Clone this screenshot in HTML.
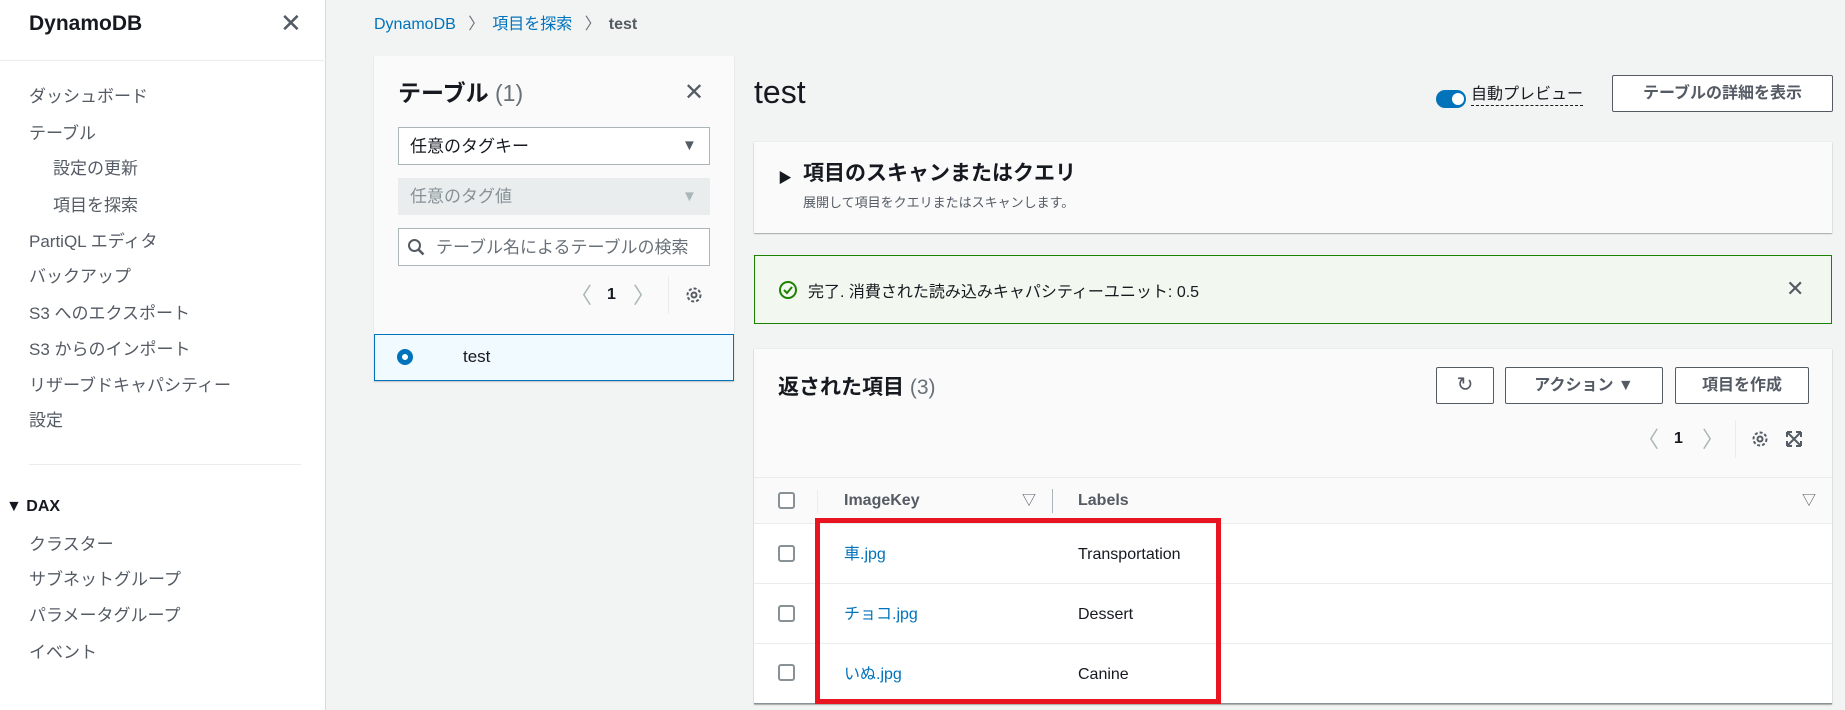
<!DOCTYPE html>
<html><head><meta charset="utf-8"><style>
*{box-sizing:border-box;margin:0;padding:0}
body{width:1845px;height:710px;overflow:hidden;background:#f2f3f3;font-family:"Liberation Sans","Noto Sans CJK JP",sans-serif;color:#16191f;position:relative;line-height:1.25}
.a{position:absolute;white-space:nowrap;line-height:1.25}
.side{position:absolute;left:0;top:0;width:326px;height:710px;background:#fff;border-right:1px solid #d5dbdb}
.nav{font-size:17px;color:#545b64;position:absolute;left:29px;line-height:20px}
.blue{color:#0073bb}
.btn{position:absolute;border:1px solid #545b64;background:#fff;border-radius:2px;font-weight:bold;font-size:16px;color:#545b64;display:flex;align-items:center;justify-content:center}
.cb{position:absolute;width:17px;height:17px;border:2px solid #879196;border-radius:3px;background:#fff}
</style></head><body>
<div class="side">
 <div class="a" style="left:29px;top:11px;font-size:21px;font-weight:bold">DynamoDB</div>
 <div class="a" style="left:280px;top:7px;font-size:26px;color:#545b64">✕</div>
 <div style="position:absolute;left:0;top:60px;width:326px;border-top:1px solid #eaeded"></div>
 <div class="nav" style="top:87px">ダッシュボード</div>
 <div class="nav" style="top:124px">テーブル</div>
 <div class="nav" style="top:159px;left:53px">設定の更新</div>
 <div class="nav" style="top:196px;left:53px">項目を探索</div>
 <div class="nav" style="top:232px">PartiQL エディタ</div>
 <div class="nav" style="top:267px">バックアップ</div>
 <div class="nav" style="top:304px">S3 へのエクスポート</div>
 <div class="nav" style="top:340px">S3 からのインポート</div>
 <div class="nav" style="top:376px">リザーブドキャパシティー</div>
 <div class="nav" style="top:411px">設定</div>
 <div style="position:absolute;left:29px;top:464px;width:272px;border-top:1px solid #eaeded"></div>
 <div class="nav" style="top:497px;left:6px;color:#16191f;font-weight:bold;font-size:16px">▼ DAX</div>
 <div class="nav" style="top:535px">クラスター</div>
 <div class="nav" style="top:570px">サブネットグループ</div>
 <div class="nav" style="top:606px">パラメータグループ</div>
 <div class="nav" style="top:643px">イベント</div>
</div>
<div class="a" style="left:374px;top:15px;font-size:16px"><span class="blue">DynamoDB</span> <span style="color:#687078;margin:0 8px">〉</span><span class="blue">項目を探索</span> <span style="color:#687078;margin:0 8px">〉</span><span style="color:#545b64;font-weight:bold">test</span></div>

<div style="position:absolute;left:374px;top:56px;width:360px;height:325px;background:#fafafa;box-shadow:0 1px 1px rgba(0,0,0,.2)"></div>
<div class="a" style="left:398px;top:79px;font-size:23px;font-weight:bold">テーブル <span style="font-weight:normal;color:#687078">(1)</span></div>
<div class="a" style="left:684px;top:78px;font-size:24px;color:#545b64">✕</div>
<div style="position:absolute;left:398px;top:127px;width:312px;height:38px;border:1px solid #aab7b8;background:#fff"></div>
<div class="a" style="left:410px;top:136px;font-size:17px">任意のタグキー</div>
<div class="a" style="left:682px;top:137px;font-size:15px;color:#545b64">▼</div>
<div style="position:absolute;left:398px;top:178px;width:312px;height:37px;background:#eaeded"></div>
<div class="a" style="left:410px;top:186px;font-size:17px;color:#879196">任意のタグ値</div>
<div class="a" style="left:682px;top:188px;font-size:15px;color:#aab7b8">▼</div>
<div style="position:absolute;left:398px;top:228px;width:312px;height:38px;border:1px solid #aab7b8;background:#fff"></div>
<svg class="a" style="left:407px;top:238px" width="18" height="18"><circle cx="7.5" cy="7.5" r="5.5" fill="none" stroke="#545b64" stroke-width="2"/><path d="M11.5 11.5l5 5" stroke="#545b64" stroke-width="2.5"/></svg>
<div class="a" style="left:436px;top:237px;font-size:17px;color:#687078">テーブル名によるテーブルの検索</div>
<div class="a" style="left:570px;top:282px;font-size:22px;color:#aab7b8">〈</div>
<div class="a" style="left:607px;top:285px;font-size:16px;font-weight:bold">1</div>
<div class="a" style="left:633px;top:282px;font-size:22px;color:#aab7b8">〉</div>
<div style="position:absolute;left:668px;top:276px;height:38px;border-left:1px solid #eaeded"></div>
<svg class="a" style="left:684px;top:285px" width="20" height="20" viewBox="0 0 20 20"><circle cx="10" cy="10" r="6.5" fill="none" stroke="#545b64" stroke-width="2" stroke-dasharray="3 2"/><circle cx="10" cy="10" r="2.5" fill="none" stroke="#545b64" stroke-width="2"/></svg>
<div style="position:absolute;left:374px;top:334px;width:360px;height:47px;background:#f1faff;border:1px solid #0073bb"></div>
<div style="position:absolute;left:397px;top:349px;width:16px;height:16px;border-radius:50%;border:5px solid #0073bb;background:#fff"></div>
<div class="a" style="left:463px;top:346px;font-size:17px">test</div>

<div class="a" style="left:754px;top:72px;font-size:32px">test</div>
<div style="position:absolute;left:1436px;top:90px;width:30px;height:18px;border-radius:9px;background:#0073bb"></div>
<div style="position:absolute;left:1452px;top:93px;width:12px;height:12px;border-radius:50%;background:#fff"></div>
<div class="a" style="left:1471px;top:85px;font-size:16px;border-bottom:1px dashed #16191f;line-height:20px">自動プレビュー</div>
<div class="btn" style="left:1612px;top:75px;width:221px;height:37px">テーブルの詳細を表示</div>

<div style="position:absolute;left:754px;top:142px;width:1078px;height:91px;background:#fafafa;box-shadow:0 1px 1px rgba(0,0,0,.3),0 0 1px rgba(0,0,0,.15)"></div>
<div class="a" style="left:778px;top:170px;font-size:14px">▶</div>
<div class="a" style="left:803px;top:161px;font-size:21px;font-weight:bold">項目のスキャンまたはクエリ</div>
<div class="a" style="left:803px;top:195px;font-size:13px;color:#545b64">展開して項目をクエリまたはスキャンします。</div>

<div style="position:absolute;left:754px;top:255px;width:1078px;height:69px;background:#f2f8f0;border:1px solid #1d8102"></div>
<svg class="a" style="left:778px;top:280px" width="20" height="20"><circle cx="10" cy="10" r="8" fill="none" stroke="#1d8102" stroke-width="2"/><path d="M6 10l3 3 5-6" fill="none" stroke="#1d8102" stroke-width="2"/></svg>
<div class="a" style="left:808px;top:283px;font-size:16px">完了. 消費された読み込みキャパシティーユニット: 0.5</div>
<div class="a" style="left:1786px;top:275px;font-size:22px;color:#545b64">✕</div>

<div style="position:absolute;left:754px;top:349px;width:1078px;height:355px;background:#fafafa;box-shadow:0 1px 1px rgba(0,0,0,.3),0 0 1px rgba(0,0,0,.15)"></div>
<div class="a" style="left:778px;top:375px;font-size:21px;font-weight:bold">返された項目 <span style="font-weight:normal;color:#687078">(3)</span></div>
<div class="btn" style="left:1436px;top:367px;width:58px;height:37px;font-size:20px;font-weight:normal">↻</div>
<div class="btn" style="left:1505px;top:367px;width:158px;height:37px">アクション ▼</div>
<div class="btn" style="left:1675px;top:367px;width:134px;height:37px">項目を作成</div>
<div class="a" style="left:1637px;top:426px;font-size:22px;color:#aab7b8">〈</div>
<div class="a" style="left:1674px;top:429px;font-size:16px;font-weight:bold">1</div>
<div class="a" style="left:1702px;top:426px;font-size:22px;color:#aab7b8">〉</div>
<div style="position:absolute;left:1735px;top:420px;height:38px;border-left:1px solid #eaeded"></div>
<svg class="a" style="left:1750px;top:429px" width="20" height="20" viewBox="0 0 20 20"><circle cx="10" cy="10" r="6.5" fill="none" stroke="#545b64" stroke-width="2" stroke-dasharray="3 2"/><circle cx="10" cy="10" r="2.5" fill="none" stroke="#545b64" stroke-width="2"/></svg>
<svg class="a" style="left:1785px;top:430px" width="18" height="18"><path d="M2 2h5M2 2v5M16 2h-5M16 2v5M2 16h5M2 16v-5M16 16h-5M16 16v-5M3 3l12 12M15 3L3 15" fill="none" stroke="#545b64" stroke-width="2"/></svg>

<div style="position:absolute;left:754px;top:477px;width:1078px;height:227px;background:#fff"></div>
<div style="position:absolute;left:754px;top:477px;width:1078px;height:47px;background:#fafafa;border-top:1px solid #eaeded;border-bottom:1px solid #eaeded"></div>
<div class="cb" style="left:778px;top:492px"></div>
<div style="position:absolute;left:817px;top:490px;height:24px;border-left:1px solid #eaeded"></div>
<div class="a" style="left:844px;top:491px;font-size:16px;font-weight:bold;color:#545b64">ImageKey</div>
<div class="a" style="left:1022px;top:492px;font-size:14px;color:#545b64">▽</div>
<div style="position:absolute;left:1052px;top:489px;height:24px;border-left:1px solid #aab7b8"></div>
<div class="a" style="left:1078px;top:491px;font-size:16px;font-weight:bold;color:#545b64">Labels</div>
<div class="a" style="left:1802px;top:492px;font-size:14px;color:#545b64">▽</div>
<div style="position:absolute;left:754px;top:583px;width:1078px;border-top:1px solid #eaeded"></div>
<div style="position:absolute;left:754px;top:643px;width:1078px;border-top:1px solid #eaeded"></div>
<div style="position:absolute;left:754px;top:703px;width:1078px;border-top:1px solid #879196"></div>
<div class="cb" style="left:778px;top:545px"></div>
<div class="cb" style="left:778px;top:605px"></div>
<div class="cb" style="left:778px;top:664px"></div>
<div class="a blue" style="left:844px;top:545px;font-size:16px">車.jpg</div>
<div class="a blue" style="left:844px;top:605px;font-size:16px">チョコ.jpg</div>
<div class="a blue" style="left:844px;top:665px;font-size:16px">いぬ.jpg</div>
<div class="a" style="left:1078px;top:545px;font-size:16px">Transportation</div>
<div class="a" style="left:1078px;top:605px;font-size:16px">Dessert</div>
<div class="a" style="left:1078px;top:665px;font-size:16px">Canine</div>
<div style="position:absolute;left:815px;top:518px;width:406px;height:186px;border:5px solid #e8141f"></div>
</body></html>
